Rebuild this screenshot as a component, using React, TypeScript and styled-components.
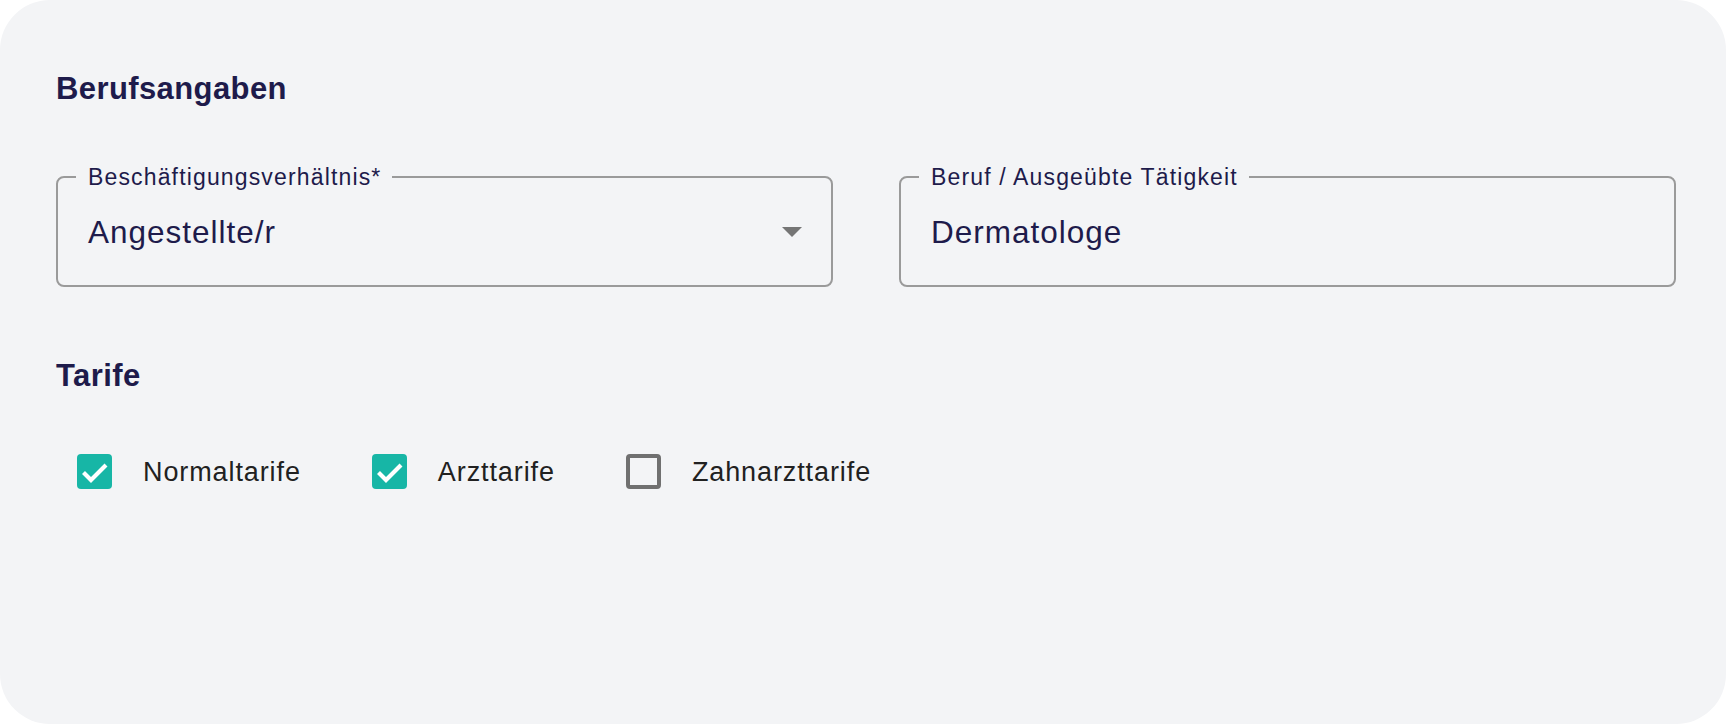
import { createGlobalStyle, styled } from "styled-components"

const GlobalStyle = createGlobalStyle`
    html, body {
        margin: 0;
        padding: 0;
        background-color: #ffffff;
    }
    body {
        font-family: "Liberation Sans", Arial, sans-serif;
    }
`

const Card = styled.section`
    box-sizing: border-box;
    width: 1726px;
    height: 724px;
    padding: 71px 50px 0 56px;
    background-color: #f3f4f6;
    border-radius: 50px;
    overflow: hidden;
`

const SectionTitle = styled.h2`
    margin: 0;
    font-weight: 700;
    font-size: 31px;
    line-height: 36px;
    letter-spacing: 0.4px;
    color: #1e1b4b;
`

const FieldRow = styled.div`
    display: grid;
    grid-template-columns: 1fr 1fr;
    column-gap: 66px;
    margin-top: 57px;
    margin-bottom: 71px;
`

const Field = styled.fieldset`
    margin: 0;
    min-width: 0;
    padding: 24px 29px 34.5px 30px;
    border: 2px solid #9a9a9a;
    border-radius: 8px;
`

const FieldLabel = styled.legend`
    margin-left: -12px;
    padding: 0 11px 0 12px;
    font-size: 23px;
    line-height: 26px;
    letter-spacing: 1.15px;
    color: #1e1b4b;
`

const ValueRow = styled.div`
    display: flex;
    align-items: center;
    justify-content: space-between;
    height: 36px;
`

const Value = styled.span`
    font-size: 31.5px;
    line-height: 36px;
    letter-spacing: 1px;
    color: #1e1b4b;
`

const CheckRow = styled.div`
    display: flex;
    align-items: center;
    gap: 71px;
    margin-top: 60px;
    padding-left: 21px;
`

const CheckItem = styled.label`
    display: flex;
    align-items: center;
    gap: 31px;
    height: 36px;
`

const Box = styled.span<{ $checked: boolean }>`
    box-sizing: border-box;
    display: flex;
    align-items: center;
    justify-content: center;
    width: 35px;
    height: 35px;
    border-radius: 4px;
    background-color: ${p => (p.$checked ? "#17b6a6" : "transparent")};
    border: ${p => (p.$checked ? "none" : "4px solid #707070")};
`

const CheckText = styled.span`
    font-size: 27px;
    line-height: 36px;
    letter-spacing: 0.9px;
    color: #212121;
`

function Checkbox({ label, checked }: { label: string; checked: boolean }) {
    return (
        <CheckItem>
            <Box $checked={checked}>
                {checked && (
                    <svg width="35" height="35" viewBox="0 0 35 35">
                        <polyline
                            points="6.5,18.5 14,26 29,11"
                            fill="none"
                            stroke="#ffffff"
                            strokeWidth="4.2"
                        />
                    </svg>
                )}
            </Box>
            <CheckText>{label}</CheckText>
        </CheckItem>
    )
}

export default function App() {
    return (
        <>
            <GlobalStyle />
            <Card>
                <SectionTitle>Berufsangaben</SectionTitle>
                <FieldRow>
                    <Field>
                        <FieldLabel>Beschäftigungsverhältnis*</FieldLabel>
                        <ValueRow>
                            <Value>Angestellte/r</Value>
                            <svg width="20" height="10" viewBox="0 0 20 10">
                                <path d="M0 0 L10 10 L20 0 Z" fill="#757575" />
                            </svg>
                        </ValueRow>
                    </Field>
                    <Field>
                        <FieldLabel>Beruf / Ausgeübte Tätigkeit</FieldLabel>
                        <ValueRow>
                            <Value>Dermatologe</Value>
                        </ValueRow>
                    </Field>
                </FieldRow>
                <SectionTitle>Tarife</SectionTitle>
                <CheckRow>
                    <Checkbox label="Normaltarife" checked />
                    <Checkbox label="Arzttarife" checked />
                    <Checkbox label="Zahnarzttarife" checked={false} />
                </CheckRow>
            </Card>
        </>
    )
}
